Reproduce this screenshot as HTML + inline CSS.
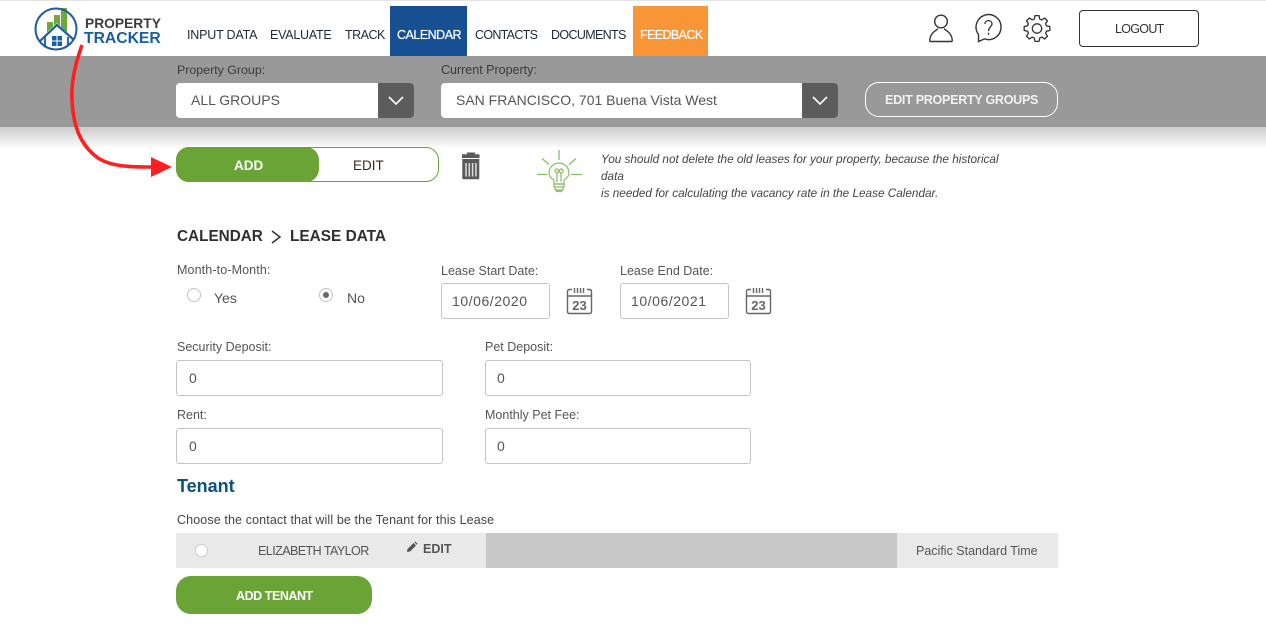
<!DOCTYPE html>
<html><head><meta charset="utf-8"><style>
html,body{margin:0;padding:0;background:#fff}
body{width:1266px;height:628px;position:relative;overflow:hidden;font-family:"Liberation Sans",sans-serif;color:#4a4a4a}
.a{position:absolute;box-sizing:border-box}
.t{position:absolute;white-space:nowrap;line-height:16px}
.n{font-size:12.5px;color:#222b3a;top:27px}
.l{font-size:12.5px;color:#555}
.i{position:absolute;box-sizing:border-box;background:#fff;border:1px solid #c4c4c4;border-radius:3px;font-size:14px;color:#555;padding-left:11px}
</style></head><body>
<div class="a" style="left:0;top:0;width:1266px;height:1px;background:#e4e4e4"></div>
<svg class="a" style="left:33px;top:6px" width="46" height="46" viewBox="0 0 46 46">
<rect x="14" y="16" width="6" height="14" fill="#6fa83c"/><rect x="21" y="9" width="6" height="14" fill="#6fa83c"/><rect x="28" y="2" width="6" height="24" fill="#6fa83c"/>
<path d="M4 36 L24 17 L43 35 V46 H4Z" fill="#fff"/>
<circle cx="23" cy="23" r="20.500" fill="none" stroke="#1a5ea0" stroke-width="2"/>
<path d="M6 36 L24 19 L41 34" fill="none" stroke="#1a5ea0" stroke-width="2.200"/>
<path d="M12 31V41.500M35 31V40" stroke="#1a5ea0" stroke-width="1.800"/>
<rect x="19" y="30" width="4.500" height="4.500" fill="#1a5ea0"/><rect x="24.500" y="30" width="4.500" height="4.500" fill="#1a5ea0"/><rect x="19" y="35.500" width="4.500" height="4.500" fill="#1a5ea0"/><rect x="24.500" y="35.500" width="4.500" height="4.500" fill="#1a5ea0"/>
</svg>
<div class="t" style="left:85px;top:16px;font-size:13.800px;font-weight:bold;color:#3c3c3c">PROPERTY</div>
<div class="t" style="left:84px;top:31px;font-size:15.700px;font-weight:bold;color:#1a5ea0">TRACKER</div>

<div class="t n" style="left:187px;letter-spacing:-.2px">INPUT DATA</div>
<div class="t n" style="left:270px;letter-spacing:-.25px">EVALUATE</div>
<div class="t n" style="left:345px;letter-spacing:-.5px">TRACK</div>
<div class="a" style="left:390px;top:6px;width:77px;height:50px;background:#175092"></div>
<div class="t n" style="left:397px;color:#fff;letter-spacing:-.5px;text-shadow:0 0 .6px #fff">CALENDAR</div>
<div class="t n" style="left:475px;letter-spacing:-.7px">CONTACTS</div>
<div class="t n" style="left:551px;letter-spacing:-.65px">DOCUMENTS</div>
<div class="a" style="left:633px;top:6px;width:75px;height:50px;background:#f89536"></div>
<div class="t n" style="left:640px;color:#fff;letter-spacing:-.6px;text-shadow:0 0 .6px #fff">FEEDBACK</div>

<svg class="a" style="left:926px;top:12px" width="30" height="32" viewBox="0 0 30 32" fill="none" stroke="#333" stroke-width="1.400">
<circle cx="15" cy="9.500" r="6.300"/><path d="M3.700 29.500C3.700 21.500 9 19 12 16.700M26.300 29.500C26.300 21.500 21 19 18 16.700M3.700 29.500H26.300"/></svg>
<svg class="a" style="left:974px;top:13px" width="30" height="30" viewBox="0 0 30 30" fill="none" stroke="#333" stroke-width="1.400">
<path d="M4.500 28.500V21.500A12.500 12.500 0 1 1 10.500 25.900Z"/>
<path d="M11 11C11 6.500 18 6.500 18 11C18 14 14.500 14 14.500 18" stroke-width="1.300"/><path d="M14.500 19.800V21.800"/></svg>
<svg class="a" style="left:1023px;top:14px" width="28" height="29" viewBox="0 0 28 29" fill="none" stroke="#333" stroke-width="1.300" stroke-linejoin="round">
<g transform="translate(14 14.500)"><circle r="4.700"/>
<path d="M-2.700-9.420L-2.030-12.840L2.030-12.840L2.700-9.420L4.750-8.570L7.640-10.510L10.510-7.640L8.570-4.750L9.420-2.700L12.840-2.030L12.840 2.030L9.420 2.700L8.570 4.750L10.510 7.640L7.640 10.510L4.750 8.570L2.700 9.420L2.030 12.840L-2.030 12.840L-2.700 9.420L-4.750 8.570L-7.640 10.510L-10.510 7.640L-8.570 4.750L-9.420 2.700L-12.840 2.030L-12.840-2.030L-9.420-2.700L-8.570-4.750L-10.510-7.640L-7.640-10.510L-4.750-8.570Z"/></g></svg>
<div class="a" style="left:1079px;top:10px;width:120px;height:37px;border:1px solid #333;border-radius:4px"></div>
<div class="t" style="left:1115px;top:21px;font-size:12.500px;color:#333;letter-spacing:-.7px">LOGOUT</div>

<div class="a" style="left:0;top:56px;width:1266px;height:71px;background:#999"></div>
<div class="a" style="left:0;top:127px;width:1266px;height:22px;background:linear-gradient(to bottom,rgba(0,0,0,.2),rgba(0,0,0,0))"></div>
<div class="t" style="left:177px;top:62px;font-size:12.400px;color:#3a3a3a">Property Group:</div>
<div class="a" style="left:176px;top:83px;width:238px;height:35px;background:#fff;border-radius:4px"></div>
<div class="a" style="left:378px;top:83px;width:36px;height:35px;background:#5c5c5c;border-radius:0 4px 4px 0"></div>
<svg class="a" style="left:378px;top:83px" width="36" height="35" fill="none" stroke="#fff" stroke-width="1.600"><path d="M11 14L18 21L25 14"/></svg>
<div class="t" style="left:191px;top:92px;font-size:14px;color:#555">ALL GROUPS</div>
<div class="t" style="left:441px;top:62px;font-size:12.500px;color:#3a3a3a">Current Property:</div>
<div class="a" style="left:441px;top:83px;width:397px;height:35px;background:#fff;border-radius:4px"></div>
<div class="a" style="left:802px;top:83px;width:36px;height:35px;background:#5c5c5c;border-radius:0 4px 4px 0"></div>
<svg class="a" style="left:802px;top:83px" width="36" height="35" fill="none" stroke="#fff" stroke-width="1.600"><path d="M11 14L18 21L25 14"/></svg>
<div class="t" style="left:456px;top:92px;font-size:14px;color:#555">SAN FRANCISCO, 701 Buena Vista West</div>
<div class="a" style="left:865px;top:82px;width:193px;height:35px;border:1px solid #fff;border-radius:14px"></div>
<div class="t" style="left:885px;top:92px;font-size:12.500px;font-weight:bold;color:#f2f2f2;letter-spacing:-.25px">EDIT PROPERTY GROUPS</div>

<div class="a" style="left:176px;top:147px;width:263px;height:35px;border:1px solid #6aa436;border-radius:13px"></div>
<div class="a" style="left:176px;top:147px;width:143px;height:35px;background:#6aa436;border-radius:13px"></div>
<div class="t" style="left:234px;top:158px;font-size:13.500px;font-weight:bold;color:#fff">ADD</div>
<div class="t" style="left:353px;top:158px;font-size:13.500px;color:#3a2a20">EDIT</div>
<svg class="a" style="left:461px;top:152px" width="20" height="28" viewBox="0 0 20 28">
<path d="M6 0.500H14V2.300H18.500V6H1V2.300H6Z" fill="#5a5a5a"/>
<path d="M1.300 7H18.300V26Q18.300 27.300 17 27.300H2.600Q1.300 27.300 1.300 26Z" fill="#5a5a5a"/>
<path d="M5 11V24.500M8.300 11V24.500M11.600 11V24.500M14.900 11V24.500" stroke="#ddd" stroke-width="1.500"/></svg>
<svg class="a" style="left:536px;top:149px" width="48" height="46" viewBox="0 0 48 46" fill="none" stroke="#8abb63" stroke-width="1.200">
<path d="M23 1V11M6 9.500L13 15.500M40 9.500L33 15.500M1 25.500H11M35 25.500H46" stroke-width="1.300"/>
<path d="M18 35V31C14.500 29 13 26.500 13 24A10 10 0 0 1 33 24C33 26.500 31.500 29 28 31V35Z"/>
<path d="M21 33V24M25 33V24M21 24C18.500 24 18.500 20 20.700 20C23 20 23 24 21 24ZM25 24C23 24 23 20 25.300 20C27.500 20 27.500 24 25 24Z"/>
<path d="M18 35H28V38H18ZM19 38H27V41H19ZM20.500 41H25.500V42.500H20.500Z"/></svg>
<div class="t" style="left:601px;top:151px;font-size:11.750px;line-height:17.200px;font-style:italic;color:#444">You should not delete the old leases for your property, because the historical<br>data<br>is needed for calculating the vacancy rate in the Lease Calendar.</div>

<div class="t" style="left:177px;top:229px;font-size:15.300px;font-weight:bold;color:#2f2f2f">CALENDAR</div>
<svg class="a" style="left:270px;top:229px" width="12" height="16" fill="none" stroke="#333" stroke-width="1.500"><path d="M2 2L10 8L2 14"/></svg>
<div class="t" style="left:290px;top:229px;font-size:15.400px;font-weight:bold;color:#2f2f2f">LEASE DATA</div>

<div class="t l" style="left:177px;top:262px;letter-spacing:.12px">Month-to-Month:</div>
<div class="a" style="left:187px;top:288px;width:14px;height:14px;border-radius:50%;border:1px solid #c4c4c4;background:#fff"></div>
<div class="t" style="left:214px;top:290px;font-size:14px;color:#555">Yes</div>
<div class="a" style="left:319px;top:288px;width:14px;height:14px;border-radius:50%;border:1px solid #c4c4c4;background:#fff"></div>
<div class="a" style="left:323px;top:292px;width:6px;height:6px;border-radius:50%;background:#666"></div>
<div class="t" style="left:347px;top:290px;font-size:14px;color:#555">No</div>

<div class="t l" style="left:441px;top:263px">Lease Start Date:</div>
<div class="i" style="left:441px;top:283px;width:109px;height:36px;line-height:35px;padding-left:10px;letter-spacing:.55px">10/06/2020</div>
<svg class="a" style="left:566px;top:287px" width="28" height="28" viewBox="0 0 28 28" fill="none" stroke="#666" stroke-width="1.400">
<path d="M6 2.500H3.500Q1.500 2.500 1.500 4.500V24.500Q1.500 26.500 3.500 26.500H23.500Q25.500 26.500 25.500 24.500V4.500Q25.500 2.500 23.500 2.500H21M1.500 9H25.500"/>
<path d="M8.500 1V6M11.500 1V6M14.500 1V6M17.500 1V6"/>
<text x="13.500" y="23" font-size="13" font-weight="bold" text-anchor="middle" fill="#666" stroke="none" font-family="Liberation Sans">23</text></svg>
<div class="t l" style="left:620px;top:263px">Lease End Date:</div>
<div class="i" style="left:620px;top:283px;width:109px;height:36px;line-height:35px;padding-left:10px;letter-spacing:.55px">10/06/2021</div>
<svg class="a" style="left:745px;top:287px" width="28" height="28" viewBox="0 0 28 28" fill="none" stroke="#666" stroke-width="1.400">
<path d="M6 2.500H3.500Q1.500 2.500 1.500 4.500V24.500Q1.500 26.500 3.500 26.500H23.500Q25.500 26.500 25.500 24.500V4.500Q25.500 2.500 23.500 2.500H21M1.500 9H25.500"/>
<path d="M8.500 1V6M11.500 1V6M14.500 1V6M17.500 1V6"/>
<text x="13.500" y="23" font-size="13" font-weight="bold" text-anchor="middle" fill="#666" stroke="none" font-family="Liberation Sans">23</text></svg>

<div class="t l" style="left:177px;top:339px">Security Deposit:</div>
<div class="i" style="left:176px;top:360px;width:267px;height:36px;line-height:35px;padding-left:12px">0</div>
<div class="t l" style="left:485px;top:339px">Pet Deposit:</div>
<div class="i" style="left:485px;top:360px;width:266px;height:36px;line-height:35px">0</div>
<div class="t l" style="left:177px;top:407px">Rent:</div>
<div class="i" style="left:176px;top:428px;width:267px;height:36px;line-height:35px;padding-left:12px">0</div>
<div class="t l" style="left:485px;top:407px">Monthly Pet Fee:</div>
<div class="i" style="left:485px;top:428px;width:266px;height:36px;line-height:35px">0</div>

<div class="t" style="left:177px;top:478px;font-size:18px;font-weight:bold;color:#0f5078">Tenant</div>
<div class="t" style="left:177px;top:512px;font-size:12.500px;color:#444;letter-spacing:.12px">Choose the contact that will be the Tenant for this Lease</div>
<div class="a" style="left:176px;top:533px;width:310px;height:35px;background:#e9e9e9"></div>
<div class="a" style="left:486px;top:533px;width:411px;height:35px;background:#c8c8c8"></div>
<div class="a" style="left:897px;top:533px;width:161px;height:35px;background:#e9e9e9"></div>
<div class="a" style="left:195px;top:544px;width:13px;height:13px;border-radius:50%;background:#fff;border:1px solid #ccc"></div>
<div class="t" style="left:258px;top:543px;font-size:12.500px;color:#555;letter-spacing:-.55px">ELIZABETH TAYLOR</div>
<svg class="a" style="left:406px;top:541px" width="12" height="12" viewBox="0 0 12 12"><path d="M1 11L1.500 8L7.500 2L10 4.500L4 10.500ZM8.300 1.200L9.200 .4L11.600 2.800L10.800 3.700Z" fill="#555"/></svg>
<div class="t" style="left:423px;top:541px;font-size:12.500px;font-weight:bold;color:#555">EDIT</div>
<div class="t" style="left:916px;top:543px;font-size:12.500px;color:#555">Pacific Standard Time</div>
<div class="a" style="left:176px;top:576px;width:196px;height:38px;background:#6aa436;border-radius:15px"></div>
<div class="t" style="left:236px;top:588px;font-size:12.500px;font-weight:bold;color:#fff;letter-spacing:-.45px">ADD TENANT</div>

<svg class="a" style="left:60px;top:40px" width="120" height="145" viewBox="0 0 120 145" fill="none">
<path d="M22 5C15 25 11 42 12 60C13 85 20 105 38 118C52 127 72 127 94 127" stroke="#fe2020" stroke-width="3.600"/>
<path d="M91 117L112 127L91 137Z" fill="#fe2020"/>
</svg>
</body></html>
